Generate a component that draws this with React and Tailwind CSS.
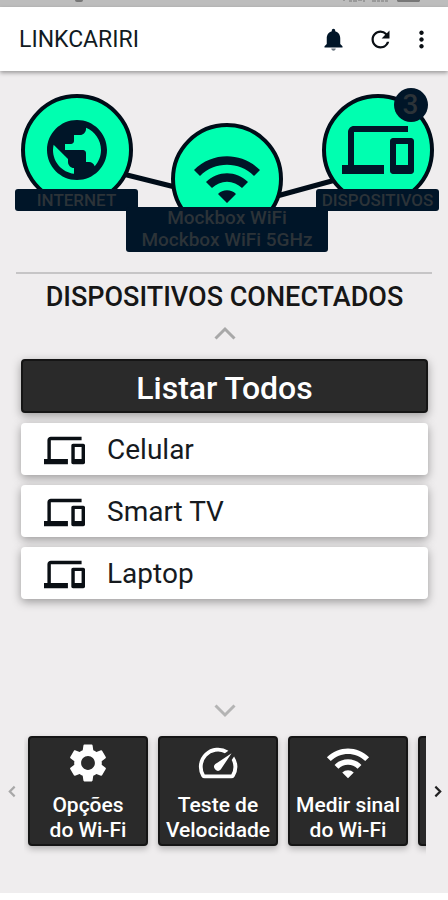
import { MdPublic, MdWifi, MdDevices, MdSettings, MdSpeed, MdRefresh, MdMoreVert } from "react-icons/md";

const devices = ["Celular", "Smart TV", "Laptop"];

const tools = [
  { Icon: MdSettings, lines: ["Opções", "do Wi-Fi"] },
  { Icon: MdSpeed, lines: ["Teste de", "Velocidade"] },
  { Icon: MdWifi, lines: ["Medir sinal", "do Wi-Fi"] },
];

function StatusBar() {
  return (
    <div className="flex h-[7px] items-start justify-between bg-[#bdbdbd] pr-7 pl-[75px]">
      <div className="h-[2px] w-2 rounded-b bg-[#777]" />
      <svg className="h-[2px] w-[77px]" viewBox="0 0 77 2" fill="#999">
        <path d="M0 0h2v1H0zM6 0h3v2H6zM10 0h4v2h-4zM15 0h4v1h-4zM20 0h2v2h-2zM29 0h4v2h-4zM34 0h3v2h-3zM38 0h3v2h-3zM42 0h3v2h-3z" />
        <path d="M54 0h23v1l-1 1H55l-1-1z" fill="#777" />
      </svg>
    </div>
  );
}

function Bell() {
  return (
    <svg viewBox="0 0 24 24" className="size-[27px]">
      <path fill="#6b7780" d="M12 22c1.1 0 2-.9 2-2h-4c0 1.100.89 2 2 2z" />
      <path
        fill="#001528"
        d="M18 16v-5c0-3.070-1.640-5.640-4.500-6.320V4c0-.83-.67-1.500-1.500-1.500s-1.500.67-1.500 1.500v.68C7.630 5.360 6 7.920 6 11v5l-2 2v1h16v-1l-2-2z"
      />
    </svg>
  );
}

function Chevron({ d, className }) {
  return (
    <svg viewBox="0 0 24 24" fill="none" stroke="currentColor" className={className}>
      <path d={d} />
    </svg>
  );
}

function Node({ Icon, label, badge }) {
  return (
    <div className="relative flex w-[123px] flex-col">
      <div className="relative mx-auto h-[95px] w-28">
        <div className="flex size-28 items-center justify-center rounded-full border-4 border-[#000c18] bg-[#00ffb0] text-[#001528]">
          <Icon className="size-[72px]" />
        </div>
        {badge && (
          <span className="absolute -top-[6px] right-[6px] flex size-[34px] items-center justify-center rounded-full bg-[#001528] text-[28px] font-medium text-[#2c3338]">
            {badge}
          </span>
        )}
      </div>
      <div className="relative h-[22px] rounded-[3px] bg-[#001528] text-center text-[17px] leading-[22px] font-medium">
        {label}
      </div>
    </div>
  );
}

function NetworkMap() {
  return (
    <section className="relative mx-auto flex h-[178px] w-[424px] justify-between text-[#2c3338]">
      <svg className="absolute inset-0" width="424" height="178" stroke="#000c18" strokeWidth="5">
        <path d="M108 80L168 95M262 102L324 85" />
      </svg>
      <Node Icon={MdPublic} label="INTERNET" />
      <div className="absolute top-[29px] left-1/2 w-[202px] -translate-x-1/2">
        <div className="mx-auto h-[84px] w-28">
          <div className="flex size-28 items-center justify-center rounded-full border-4 border-[#000c18] bg-[#00ffb0] text-[#001528]">
            <MdWifi className="size-[72px]" />
          </div>
        </div>
        <div className="relative h-[45px] rounded-[3px] bg-[#001528] text-center text-[19px] leading-[22px] font-medium">
          <p>Mockbox WiFi</p>
          <p>Mockbox WiFi 5GHz</p>
        </div>
      </div>
      <Node Icon={MdDevices} label="DISPOSITIVOS" badge="3" />
    </section>
  );
}

function ConnectedDevices() {
  return (
    <section className="flex flex-col pr-5 pl-[21px]">
      <h2 className="text-center text-[27px] leading-8 font-medium whitespace-nowrap text-[#161616]">
        DISPOSITIVOS CONECTADOS
      </h2>
      <button aria-label="Anterior" className="mx-auto mt-1 h-8 text-[#a8a8a8]">
        <Chevron d="M2.500 17.500L12 8l9.500 9.500" className="size-6 stroke-[3]" />
      </button>
      <button className="mt-[10px] h-[54px] rounded-[4px] border-2 border-[#151515] bg-[#2a2a2a] pt-[3px] text-[32px] leading-none font-medium text-white shadow-[0_3px_10px_rgba(0,0,0,0.35)]">
        Listar Todos
      </button>
      <ul className="mt-[10px] flex flex-col gap-[10px]">
        {devices.map((name) => (
          <li key={name}>
            <button className="flex h-[52px] w-full items-center gap-[22px] rounded-[4px] bg-white pt-[2px] pl-[23px] text-[28px] text-[#161a1e] shadow-[0_3px_10px_rgba(0,0,0,0.35)]">
              <MdDevices className="size-[41px] text-[#0a0f14]" />
              {name}
            </button>
          </li>
        ))}
      </ul>
      <button aria-label="Próximo" className="mx-auto mt-[99px] h-6 text-[#b4b4b4]">
        <Chevron d="M2.500 7.500L12 17l9.500-9.500" className="size-6 stroke-[3]" />
      </button>
    </section>
  );
}

function ToolCarousel() {
  const card =
    "flex h-[110px] w-[120px] shrink-0 flex-col items-center rounded-[4px] border-2 border-[#151515] bg-[#2a2a2a] pt-[2px] text-[21px] leading-[25px] font-medium whitespace-nowrap text-white shadow-[0_3px_6px_rgba(0,0,0,0.25)]";
  return (
    <nav className="flex items-center">
      <button aria-label="Voltar" className="flex w-6 shrink-0 justify-center text-[#a8a8a8]">
        <Chevron d="M16 3L7 12l9 9" className="size-[13px] stroke-[4]" />
      </button>
      <div className="flex min-w-0 flex-1 gap-[10px] overflow-hidden py-[10px] pl-1">
        {tools.map(({ Icon, lines }) => (
          <button key={lines.join(" ")} className={card}>
            <Icon className="size-[46px] shrink-0" />
            <span className="mt-[7px] block">
              {lines[0]}
              <br />
              {lines[1]}
            </span>
          </button>
        ))}
        <div className={card} />
      </div>
      <button aria-label="Avançar" className="flex w-[22px] shrink-0 justify-center text-[#222]">
        <Chevron d="M8 3l9 9-9 9" className="size-[13px] stroke-[4]" />
      </button>
    </nav>
  );
}

export default function App() {
  return (
    <div className="min-h-screen bg-white font-[Roboto,sans-serif]">
      <div className="bg-[#efedee] pb-[37px]">
        <StatusBar />
        <header className="flex h-16 items-center bg-white pr-[19px] pl-[19px] shadow-[0_2px_4px_rgba(0,0,0,0.35)]">
          <h1 className="flex-1 pt-[2px] text-[23px] text-[#111a22]">LINKCARIRI</h1>
          <div className="flex items-center gap-5 text-[#0a0f14]">
            <button aria-label="Notificações">
              <Bell />
            </button>
            <button aria-label="Atualizar">
              <MdRefresh className="size-[27px]" />
            </button>
            <button aria-label="Mais" className="-mx-[6px]">
              <MdMoreVert className="size-[27px]" />
            </button>
          </div>
        </header>
        <main>
          <div className="pt-[23px] pl-[6px]">
            <NetworkMap />
          </div>
          <hr className="mx-4 mb-[7px] border-t-2 border-[#c6c5c6]" />
          <ConnectedDevices />
          <div className="mt-1">
            <ToolCarousel />
          </div>
        </main>
      </div>
    </div>
  );
}
